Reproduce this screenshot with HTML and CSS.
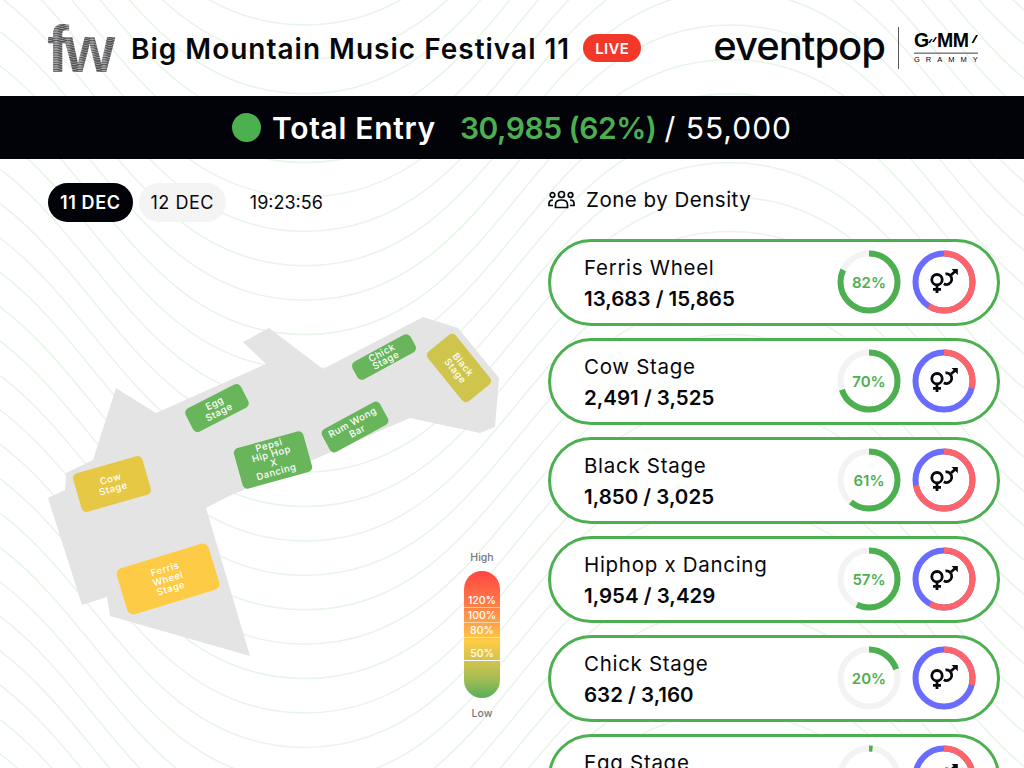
FILE: index.html
```html
<!DOCTYPE html>
<html lang="en">
<head>
<meta charset="utf-8">
<title>Big Mountain Music Festival 11</title>
<link rel="stylesheet" href="styles.css">
</head>
<body>
<div class="page">
  <svg class="waves" width="1024" height="768" viewBox="0 0 1024 768" aria-hidden="true">
    <defs>
      <path id="wave" d="M-120,-275.2 C80,-275.2 105,0 305,0 C505,0 530,-275.2 730,-275.2 C930,-275.2 955,0 1155,0"/>
    </defs>
    <g class="wave-lines">
      <use href="#wave" y="25"/><use href="#wave" y="59.4"/><use href="#wave" y="93.8"/><use href="#wave" y="128.2"/><use href="#wave" y="162.6"/><use href="#wave" y="197"/><use href="#wave" y="231.4"/><use href="#wave" y="265.8"/><use href="#wave" y="300.2"/><use href="#wave" y="334.6"/><use href="#wave" y="369"/><use href="#wave" y="403.4"/><use href="#wave" y="437.8"/><use href="#wave" y="472.2"/><use href="#wave" y="506.6"/><use href="#wave" y="541"/><use href="#wave" y="575.4"/><use href="#wave" y="609.8"/><use href="#wave" y="644.2"/><use href="#wave" y="678.6"/><use href="#wave" y="713"/><use href="#wave" y="747.4"/><use href="#wave" y="781.8"/><use href="#wave" y="816.2"/><use href="#wave" y="850.6"/><use href="#wave" y="885"/><use href="#wave" y="919.4"/><use href="#wave" y="953.8"/><use href="#wave" y="988.2"/><use href="#wave" y="1022.6"/><use href="#wave" y="1057"/>
    </g>
  </svg>

  <header class="header">
    <div class="brand">
      <svg class="fw-logo" width="72" height="78" viewBox="0 0 72 78">
        <defs>
          <pattern id="fwstripes" width="12" height="2.4" patternUnits="userSpaceOnUse">
            <rect width="12" height="2.4" fill="#a4a4a6"/>
            <path d="M0,.8 Q3,2.6 6,.8 T12,.8" fill="none" stroke="#48484b" stroke-width="1.3"/>
          </pattern>
        </defs>
        <text class="fw-text" x="0" y="63" fill="url(#fwstripes)">fw</text>
      </svg>
      <h1 class="title">Big Mountain Music Festival 11</h1>
      <span class="live">LIVE</span>
    </div>
    <div class="sponsors">
      <span class="eventpop">eventpop</span>
      <span class="divider"></span>
      <svg class="gmm" width="72" height="36" viewBox="0 0 72 36">
        <text class="gmm-main" x="1" y="17">G</text>
        <path d="M15,13 L18,9 L19.500,9 L17,13 Z M19,12 L22.500,7 L24,7 L21,12 Z"/>
        <text class="gmm-main" x="24" y="17">MM</text>
        <path d="M58.500,13 L63,5 L65,5 L60.500,13 Z"/>
        <rect class="gmm-rule" x="1" y="22.500" width="64" height="1.4"/>
        <text class="gmm-sub" x="1" y="32">GRAMMY</text>
      </svg>
    </div>
  </header>

  <section class="total">
    <span class="total-dot"></span>
    <span class="total-label">Total Entry</span>
    <span class="total-value">30,985 (62%)</span>
    <span class="total-max">/ 55,000</span>
  </section>

  <main class="main">
    <section class="left">
      <svg class="map" width="548" height="609" viewBox="0 159 548 609">
        <polygon class="plate" points="269,328 323,369 423,317 458,328 499,378 495,427 480,433 410,418 227,497 206,508 250,656 110,616 107,597 82,605 48,498 65,490 66,473 93,460 116,388 156,413 266,364 243,342"/>

        <g transform="translate(217 408) rotate(-27)">
          <rect class="st-green" x="-31" y="-13" width="62" height="26" rx="5"/>
          <text class="st-text" y="-2">Egg</text><text class="st-text" y="8">Stage</text>
        </g>
        <g transform="translate(112 484) rotate(-16)">
          <rect class="st-cow" x="-36" y="-20" width="72" height="40" rx="5"/>
          <text class="st-text" y="-2">Cow</text><text class="st-text" y="8">Stage</text>
        </g>
        <g transform="translate(273 460) rotate(-15.5)">
          <rect class="st-green" x="-36" y="-21" width="72" height="42" rx="5"/>
          <text class="st-text" y="-12">Pepsi</text><text class="st-text" y="-3">Hip Hop</text><text class="st-text" y="6">X</text><text class="st-text" y="15.500">Dancing</text>
        </g>
        <g transform="translate(355 427) rotate(-28.600)">
          <rect class="st-green" x="-33" y="-13" width="66" height="26" rx="5"/>
          <text class="st-text" y="-2">Rum Wong</text><text class="st-text" y="8">Bar</text>
        </g>
        <g transform="translate(384 357) rotate(-28.600)">
          <rect class="st-green" x="-33" y="-10" width="66" height="20" rx="5"/>
          <text class="st-text" y="-1.500">Chick</text><text class="st-text" y="7">Stage</text>
        </g>
        <g transform="translate(459 368) rotate(51)">
          <rect class="st-black" x="-32" y="-18" width="64" height="36" rx="5"/>
          <text class="st-text" y="-2">Black</text><text class="st-text" y="8">Stage</text>
        </g>
        <g transform="translate(168 579) rotate(-17)">
          <rect class="st-ferris" x="-48" y="-24" width="96" height="48" rx="6"/>
          <text class="st-text" y="-7">Ferris</text><text class="st-text" y="3">Wheel</text><text class="st-text" y="13">Stage</text>
        </g>
      </svg>

      <div class="controls">
        <span class="pill pill-on">11 DEC</span>
        <span class="pill">12 DEC</span>
        <span class="clock">19:23:56</span>
      </div>

      <div class="legend">
        <span class="legend-cap legend-high">High</span>
        <div class="legend-bar">
          <span class="tick tick-120">120%</span>
          <span class="tick tick-100">100%</span>
          <span class="tick tick-80">80%</span>
          <span class="tick tick-50">50%</span>
        </div>
        <span class="legend-cap legend-low">Low</span>
      </div>
    </section>

    <section class="right">
      <h2 class="zone-head">
        <svg class="people" width="27" height="20" viewBox="0 0 27 20">
          <circle cx="13.500" cy="4.500" r="3"/>
          <circle cx="4.500" cy="5" r="2.300"/>
          <circle cx="22.500" cy="5" r="2.300"/>
          <path d="M7.500,17.500 V14.500 C7.500,11.500 10,10 13.500,10 C17,10 19.500,11.500 19.500,14.500 V17.500 Z"/>
          <path d="M5,10 C2.500,10 1,11.500 1,13.500 V15.500 H5"/>
          <path d="M22,10 C24.500,10 26,11.500 26,13.500 V15.500 H22"/>
        </svg>
        <span>Zone by Density</span>
      </h2>

      <ul class="zones">
        <li class="zone">
          <div class="zone-info"><span class="zone-name">Ferris Wheel</span><span class="zone-count">13,683 / 15,865</span></div>
          <svg class="ring" width="64" height="64" viewBox="0 0 64 64"><circle class="track" cx="32" cy="32" r="28.500"/><circle class="bar" cx="32" cy="32" r="28.500" pathLength="100" stroke-dasharray="82 100" transform="rotate(-90 32 32)"/><text class="pct" x="32" y="37.500">82%</text></svg>
          <svg class="ring" width="64" height="64" viewBox="0 0 64 64"><circle class="male" cx="32" cy="32" r="28.500"/><circle class="female" cx="32" cy="32" r="28.500" pathLength="100" stroke-dasharray="59 100" transform="rotate(-90 32 32)"/><use href="#gender"/></svg>
        </li>
        <li class="zone">
          <div class="zone-info"><span class="zone-name">Cow Stage</span><span class="zone-count">2,491 / 3,525</span></div>
          <svg class="ring" width="64" height="64" viewBox="0 0 64 64"><circle class="track" cx="32" cy="32" r="28.500"/><circle class="bar" cx="32" cy="32" r="28.500" pathLength="100" stroke-dasharray="70 100" transform="rotate(-90 32 32)"/><text class="pct" x="32" y="37.500">70%</text></svg>
          <svg class="ring" width="64" height="64" viewBox="0 0 64 64"><circle class="male" cx="32" cy="32" r="28.500"/><circle class="female" cx="32" cy="32" r="28.500" pathLength="100" stroke-dasharray="29 100" transform="rotate(-90 32 32)"/><use href="#gender"/></svg>
        </li>
        <li class="zone">
          <div class="zone-info"><span class="zone-name">Black Stage</span><span class="zone-count">1,850 / 3,025</span></div>
          <svg class="ring" width="64" height="64" viewBox="0 0 64 64"><circle class="track" cx="32" cy="32" r="28.500"/><circle class="bar" cx="32" cy="32" r="28.500" pathLength="100" stroke-dasharray="61 100" transform="rotate(-90 32 32)"/><text class="pct" x="32" y="37.500">61%</text></svg>
          <svg class="ring" width="64" height="64" viewBox="0 0 64 64"><circle class="male" cx="32" cy="32" r="28.500"/><circle class="female" cx="32" cy="32" r="28.500" pathLength="100" stroke-dasharray="72 100" transform="rotate(-90 32 32)"/><use href="#gender"/></svg>
        </li>
        <li class="zone">
          <div class="zone-info"><span class="zone-name">Hiphop x Dancing</span><span class="zone-count">1,954 / 3,429</span></div>
          <svg class="ring" width="64" height="64" viewBox="0 0 64 64"><circle class="track" cx="32" cy="32" r="28.500"/><circle class="bar" cx="32" cy="32" r="28.500" pathLength="100" stroke-dasharray="57 100" transform="rotate(-90 32 32)"/><text class="pct" x="32" y="37.500">57%</text></svg>
          <svg class="ring" width="64" height="64" viewBox="0 0 64 64"><circle class="male" cx="32" cy="32" r="28.500"/><circle class="female" cx="32" cy="32" r="28.500" pathLength="100" stroke-dasharray="58 100" transform="rotate(-90 32 32)"/><use href="#gender"/></svg>
        </li>
        <li class="zone">
          <div class="zone-info"><span class="zone-name">Chick Stage</span><span class="zone-count">632 / 3,160</span></div>
          <svg class="ring" width="64" height="64" viewBox="0 0 64 64"><circle class="track" cx="32" cy="32" r="28.500"/><circle class="bar" cx="32" cy="32" r="28.500" pathLength="100" stroke-dasharray="20 100" transform="rotate(-90 32 32)"/><text class="pct" x="32" y="37.500">20%</text></svg>
          <svg class="ring" width="64" height="64" viewBox="0 0 64 64"><circle class="male" cx="32" cy="32" r="28.500"/><circle class="female" cx="32" cy="32" r="28.500" pathLength="100" stroke-dasharray="29 100" transform="rotate(-90 32 32)"/><use href="#gender"/></svg>
        </li>
        <li class="zone">
          <div class="zone-info"><span class="zone-name">Egg Stage</span><span class="zone-count">54 / 2,700</span></div>
          <svg class="ring" width="64" height="64" viewBox="0 0 64 64"><circle class="track" cx="32" cy="32" r="28.500"/><circle class="bar" cx="32" cy="32" r="28.500" pathLength="100" stroke-dasharray="2 100" transform="rotate(-90 32 32)"/><text class="pct" x="32" y="37.500">2%</text></svg>
          <svg class="ring" width="64" height="64" viewBox="0 0 64 64"><circle class="male" cx="32" cy="32" r="28.500"/><circle class="female" cx="32" cy="32" r="28.500" pathLength="100" stroke-dasharray="30 100" transform="rotate(-90 32 32)"/><use href="#gender"/></svg>
        </li>
      </ul>
    </section>
  </main>

  <svg class="defs" width="0" height="0" aria-hidden="true">
    <defs>
      <g id="gender" class="gender">
        <circle cx="25" cy="29.700" r="5.200"/>
        <path d="M25,35 V43 M21,39.300 H29"/>
        <path d="M33.500,24 A5.300,5.300 0 1 1 31.800,33.800"/>
        <path d="M39,25 L43,21.500"/>
        <path class="gender-head" d="M39.500,19 H45.800 V25.300 Z"/>
      </g>
    </defs>
  </svg>
</div>
</body>
</html>
```

FILE: styles.css
```css
* { box-sizing: border-box; }
html, body { margin: 0; padding: 0; }
body {
  font-family: "Inter", "Liberation Sans", sans-serif;
  color: #07080c;
  background: #fff;
}
.page {
  position: relative;
  width: 1024px;
  height: 768px;
  overflow: hidden;
  background: #fff;
}
.waves { position: absolute; inset: 0; }
.wave-lines use {
  fill: none;
  stroke: #e8f5e8;
  stroke-width: 1.5;
}
.defs { position: absolute; }

/* header */
.header {
  position: relative;
  height: 96px;
  display: flex;
  align-items: center;
  justify-content: space-between;
  padding: 0 39px 0 47px;
}
.brand { display: flex; align-items: center; }
.fw-logo { margin-right: 12px; }
.fw-text {
  font-family: "Liberation Sans", sans-serif;
  font-weight: 700;
  font-size: 66px;
  letter-spacing: -5px;
}
.title {
  margin: 2px 13px 0 0;
  font-size: 28px;
  font-weight: 600;
  letter-spacing: 1px;
  white-space: nowrap;
}
.live {
  width: 58px;
  height: 28px;
  border-radius: 14px;
  background: #f2372b;
  color: #fff;
  font-size: 15px;
  font-weight: 600;
  letter-spacing: .3px;
  display: flex;
  align-items: center;
  justify-content: center;
}
.sponsors { display: flex; align-items: center; }
.eventpop {
  margin-top: -4px;
  font-size: 40px;
  font-weight: 500;
  letter-spacing: -1px;
  line-height: 40px;
}
.divider {
  width: 1px;
  height: 42px;
  background: #555;
  margin: 0 14px 0 13px;
}
.gmm-main {
  font-family: "Liberation Sans", sans-serif;
  font-weight: 700;
  font-size: 19.500px;
  letter-spacing: -0.5px;
}
.gmm-rule { fill: #777; }
.gmm-sub {
  font-family: "Liberation Sans", sans-serif;
  font-size: 7.500px;
  letter-spacing: 6px;
}

/* total bar */
.total {
  position: relative;
  height: 63px;
  background: #020308;
  color: #fff;
  display: flex;
  align-items: center;
  padding-left: 232px;
  font-size: 30px;
}
.total-dot {
  width: 29px;
  height: 29px;
  border-radius: 50%;
  background: #4caf50;
  margin-right: 11px;
}
.total-label { font-weight: 600; margin-right: 24px; letter-spacing: .7px; }
.total-value { font-weight: 600; color: #4caf50; margin-right: 8px; letter-spacing: -.5px; }
.total-max { font-weight: 400; letter-spacing: 1px; }

/* main */
.main {
  position: relative;
  display: flex;
  height: 609px;
}
.left {
  position: relative;
  width: 548px;
  flex: none;
  padding: 24px 0 0 48px;
}
.map { position: absolute; left: 0; top: 0; }
.plate { fill: #e4e4e4; }
.st-green { fill: #69b55b; }
.st-cow { fill: #e6c845; }
.st-black { fill: #cfc54c; }
.st-ferris { fill: #fdcb45; }
.st-text {
  fill: #fff;
  font-size: 9.500px;
  font-weight: 500;
  letter-spacing: .5px;
  text-anchor: middle;
}
.controls {
  position: relative;
  display: flex;
  align-items: center;
  gap: 6px;
}
.pill {
  height: 39px;
  padding: 0 12px;
  border-radius: 20px;
  background: #f4f4f4;
  font-size: 18px;
  font-weight: 400;
  letter-spacing: .5px;
  display: flex;
  align-items: center;
}
.pill-on { background: #020308; color: #fff; font-weight: 600; letter-spacing: .6px; }
.clock { margin-left: 18px; font-size: 18px; }

.legend {
  position: absolute;
  left: 464px;
  top: 393px;
  width: 36px;
  display: flex;
  flex-direction: column;
  align-items: center;
}
.legend-cap {
  font-size: 10.500px;
  font-weight: 500;
  color: #77787c;
  line-height: 12px;
}
.legend-high { margin-bottom: 7px; }
.legend-low { margin-top: 10px; }
.legend-bar {
  position: relative;
  width: 36px;
  height: 127px;
  border-radius: 18px;
  overflow: hidden;
  background: linear-gradient(180deg, #ff4540 0%, #ff7a48 25%, #ffa845 43%, #ffcc45 55%, #d6c24e 70%, #a8bd52 84%, #55b05a 100%);
}
.tick {
  position: absolute;
  left: 0;
  width: 100%;
  height: 15px;
  border-bottom: 1px solid rgba(255, 255, 255, .55);
  color: #fff;
  font-size: 10.500px;
  line-height: 16px;
  text-align: center;
  font-weight: 500;
}
.tick-120 { top: 22px; }
.tick-100 { top: 37px; }
.tick-80 { top: 52px; }
.tick-50 { top: 75px; border-bottom-color: #fff; }

/* zone list */
.right { position: relative; width: 452px; flex: none; padding-top: 27px; }
.zone-head {
  margin: 0 0 26px;
  height: 27px;
  display: flex;
  align-items: center;
  gap: 11px;
  font-size: 20.500px;
  font-weight: 400;
  letter-spacing: .5px;
}
.people { fill: none; stroke: #07080c; stroke-width: 1.7; }
.zones {
  list-style: none;
  margin: 0;
  padding: 0;
  display: flex;
  flex-direction: column;
  gap: 12px;
}
.zone {
  flex: none;
  height: 87px;
  border: 3px solid #4caf50;
  border-radius: 44px;
  background: #fff;
  display: flex;
  align-items: center;
  padding: 0 21px 1px 33px;
  gap: 11px;
}
.zone-info { flex: 1; display: flex; flex-direction: column; gap: 9px; padding-top: 3px; }
.zone-name { font-size: 20.500px; line-height: 22px; letter-spacing: .7px; }
.zone-count { font-size: 20.500px; line-height: 22px; font-weight: 600; }
.ring { flex: none; }
.ring circle { fill: none; stroke-width: 6; }
.track { stroke: #f3f3f3; }
.bar { stroke: #4caf50; }
.male { stroke: #6a6cff; }
.female { stroke: #ff6468; }
.pct {
  fill: #4caf50;
  font-size: 15px;
  font-weight: 600;
  text-anchor: middle;
}
.gender { fill: none; stroke: #07080c; stroke-width: 2.8; }
.ring .gender circle { stroke-width: 2.8; stroke: #07080c; }
.gender-head { fill: #07080c; stroke: none; }
```
